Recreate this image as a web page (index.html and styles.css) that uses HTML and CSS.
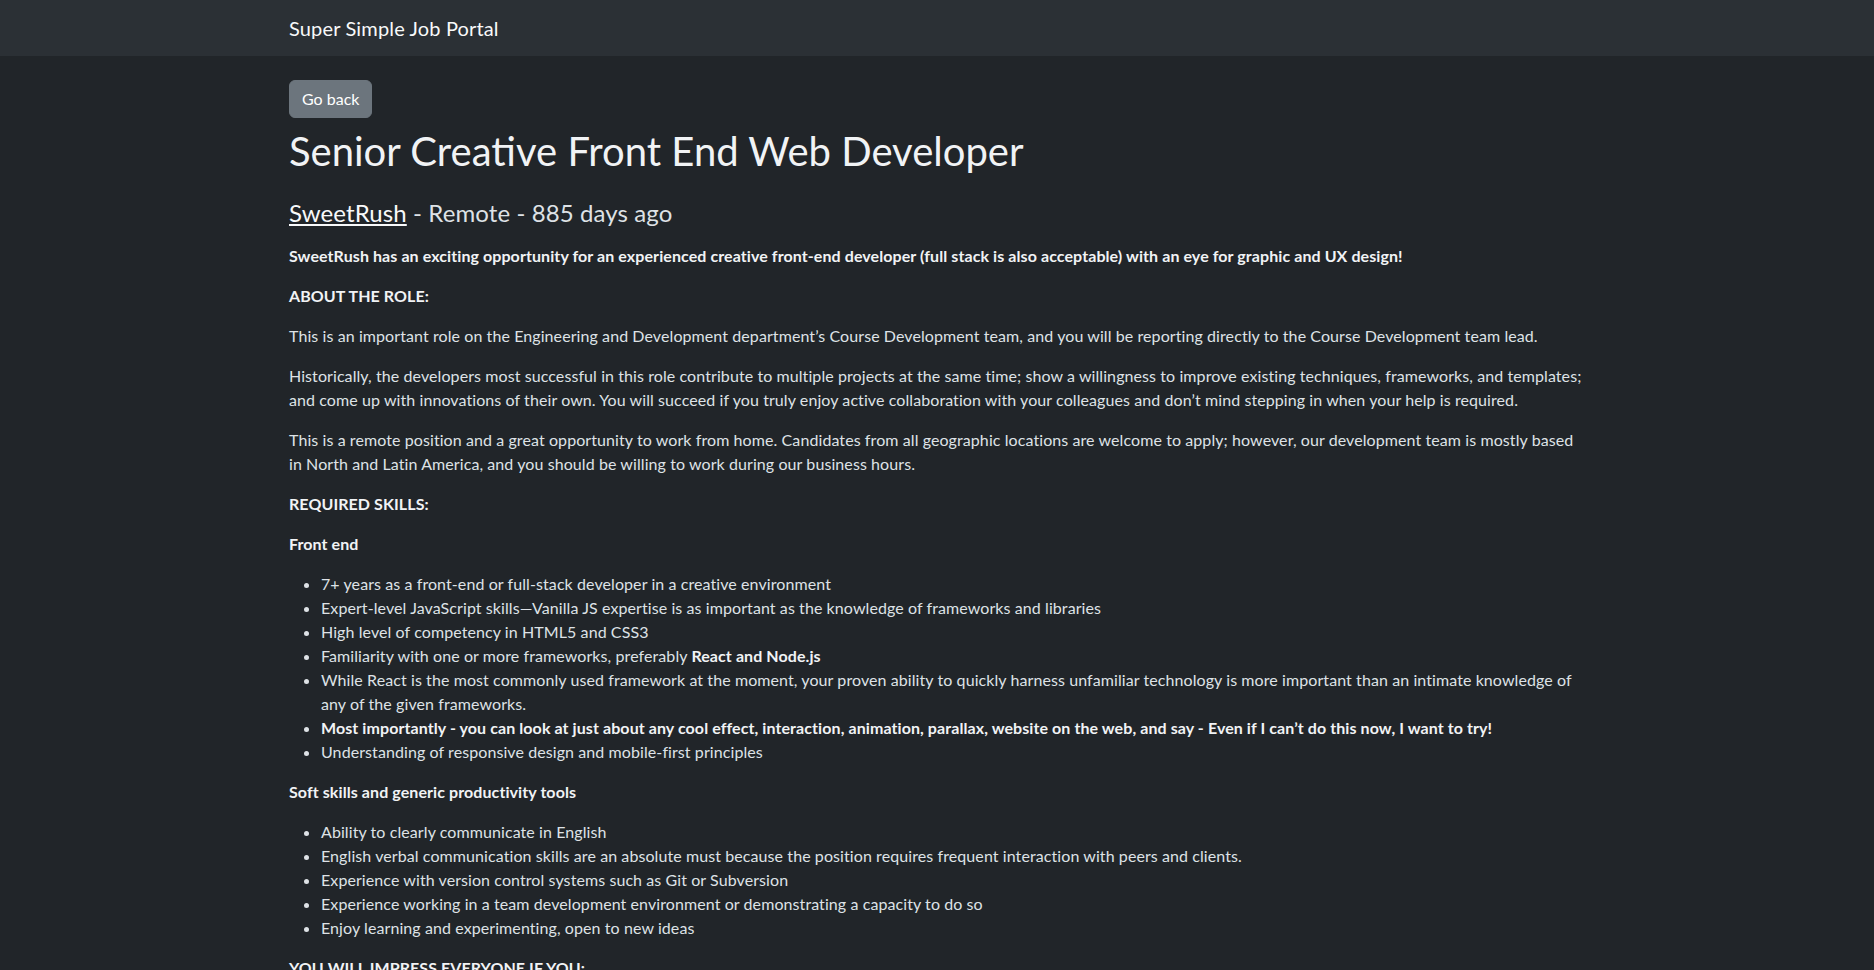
FILE: index.html
```html
<!DOCTYPE html>
<html lang="en">
<head>
<meta charset="utf-8">
<title>Super Simple Job Portal</title>
<link rel="stylesheet" href="styles.css">
</head>
<body>
<nav class="navbar">
  <div class="container">
    <a class="brand" href="#">Super Simple Job Portal</a>
  </div>
</nav>
<main class="container">
  <button class="btn" type="button">Go back</button>
  <h1 class="title">Senior Creative Front End Web Developer</h1>
  <h4 class="meta"><a class="company" href="#">SweetRush</a> - Remote - 885 days ago</h4>
  <div class="description">
    <p><strong>SweetRush has an exciting opportunity for an experienced creative front-end developer (full stack is also acceptable) with an eye for graphic and UX design!</strong></p>
    <p><strong>ABOUT THE ROLE:</strong></p>
    <p>This is an important role on the Engineering and Development department’s Course Development team, and you will be reporting directly to the Course Development team lead.</p>
    <p>Historically, the developers most successful in this role contribute to multiple projects at the same time; show a willingness to improve existing techniques, frameworks, and templates; and come up with innovations of their own. You will succeed if you truly enjoy active collaboration with your colleagues and don’t mind stepping in when your help is required.</p>
    <p>This is a remote position and a great opportunity to work from home. Candidates from all geographic locations are welcome to apply; however, our development team is mostly based in North and Latin America, and you should be willing to work during our business hours.</p>
    <p><strong>REQUIRED SKILLS:</strong></p>
    <p><strong>Front end</strong></p>
    <ul>
      <li>7+ years as a front-end or full-stack developer in a creative environment</li>
      <li>Expert-level JavaScript skills—Vanilla JS expertise is as important as the knowledge of frameworks and libraries</li>
      <li>High level of competency in HTML5 and CSS3</li>
      <li>Familiarity with one or more frameworks, preferably <strong>React and Node.js</strong></li>
      <li>While React is the most commonly used framework at the moment, your proven ability to quickly harness unfamiliar technology is more important than an intimate knowledge of any of the given frameworks.</li>
      <li><strong>Most importantly - you can look at just about any cool effect, interaction, animation, parallax, website on the web, and say - Even if I can’t do this now, I want to try!</strong></li>
      <li>Understanding of responsive design and mobile-first principles</li>
    </ul>
    <p><strong>Soft skills and generic productivity tools</strong></p>
    <ul>
      <li>Ability to clearly communicate in English</li>
      <li>English verbal communication skills are an absolute must because the position requires frequent interaction with peers and clients.</li>
      <li>Experience with version control systems such as Git or Subversion</li>
      <li>Experience working in a team development environment or demonstrating a capacity to do so</li>
      <li>Enjoy learning and experimenting, open to new ideas</li>
    </ul>
    <p><strong>YOU WILL IMPRESS EVERYONE IF YOU:</strong></p>
    <ul>
      <li>Have a strong eye for design and animation</li>
      <li>Have experience with WebGL, Three.js, or other 3D libraries</li>
    </ul>
  </div>
</main>
</body>
</html>
```

FILE: styles.css
```css
*, *::before, *::after { box-sizing: border-box; }

html, body {
  margin: 0;
  background: #212529;
}

body {
  font-family: Lato, "Open Sans", sans-serif;
  font-size: 16px;
  line-height: 1.5;
  color: #dee2e6;
}

.container {
  width: 100%;
  max-width: 1320px;
  margin: 0 auto;
  padding: 0 12px;
}

.navbar {
  background: #2b3035;
  height: 56px;
  display: flex;
  align-items: center;
}

.brand {
  font-size: 20px;
  line-height: 30px;
  letter-spacing: 0.15px;
  color: #f8f9fa;
  text-decoration: none;
}

main.container {
  padding-top: 24px;
}

.btn {
  display: block;
  font-family: inherit;
  font-size: 16px;
  line-height: 24px;
  padding: 6px 12px;
  border: 1px solid #6c757d;
  border-radius: 6px;
  background: #6c757d;
  color: #fff;
  margin: 0 0 9px;
  cursor: pointer;
}

.title {
  font-size: 40px;
  font-weight: 400;
  line-height: 1.2;
  margin: 0 0 24px;
  color: #f1f3f5;
}

.meta {
  font-size: 24px;
  font-weight: 400;
  line-height: 1.2;
  letter-spacing: 0.1px;
  margin: 0 0 16px;
  color: #dee2e6;
}

.company {
  color: #f8f9fa;
  text-decoration: underline;
}

.description {
  letter-spacing: 0.085px;
}

.description p {
  margin: 0 0 16px;
}

.description strong {
  font-weight: 700;
  color: #f1f3f5;
}

.description ul {
  margin: 0 0 16px;
  padding-left: 32px;
}
```
